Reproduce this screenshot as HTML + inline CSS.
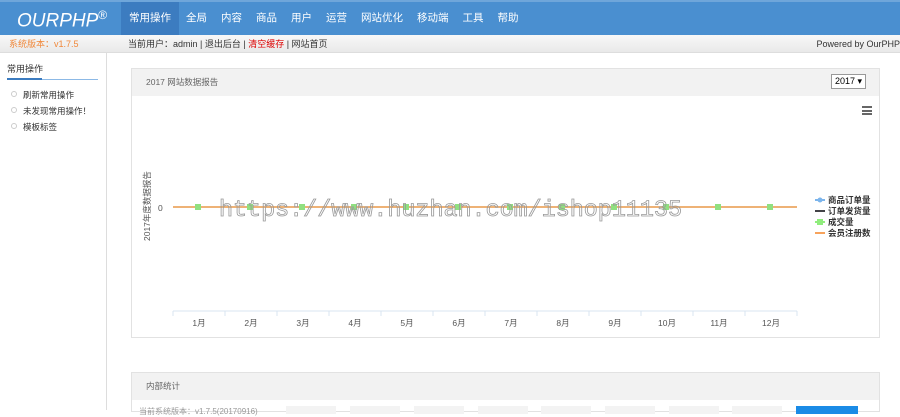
<!DOCTYPE html>
<html><head><meta charset="utf-8"><style>
*{margin:0;padding:0;box-sizing:border-box}
body{width:900px;height:410px;overflow:hidden;background:#fff;font-family:"Liberation Sans","Noto Sans CJK SC",sans-serif;font-size:9px;color:#333;position:relative}
.top{position:absolute;left:0;top:0;width:900px;height:35px;background:#4a8fd0;border-top:2px solid #6fa6da}
.logo{position:absolute;left:17px;top:6px;color:#fff;font-size:19px;font-style:italic;letter-spacing:0px}
.logo sup{font-size:12px;font-style:normal}
.nav{position:absolute;left:121px;top:0;height:33px;display:flex}
.nav span{color:#fff;font-size:10.5px;line-height:33px;padding:0 7px}
.nav span.on{background:#3c7cc0;padding:0 8px}
.sub{position:absolute;top:35px;left:0;width:900px;height:18px;background:linear-gradient(#f8f8f8,#e9e9e9);border-bottom:1px solid #ddd;line-height:18px}
.side{position:absolute;left:0;top:53px;width:107px;height:357px;background:#fff;border-right:1px solid #ddd}
.side h3{font-size:9px;font-weight:normal;margin:9px 0 0 7px}
.side .ln{position:absolute;left:7px;top:26px;width:91px;height:1px;background:#8cb9e6}
.side .ln2{position:absolute;left:7px;top:25px;width:35px;height:2px;background:#3c7cc0}
.side ul{list-style:none;position:absolute;top:37px;left:11px}
.side li{height:16px;line-height:11px;font-size:8.5px}
.side li:before{content:"";display:inline-block;width:4px;height:4px;border:1px solid #ccc;border-radius:50%;margin-right:6px;vertical-align:1px}
.panel{position:absolute;left:131px;width:749px;border:1px solid #e2e2e2;background:#fff}
.ph{height:27px;background:#f2f2f2;line-height:27px;padding-left:14px;color:#666;font-size:8.5px}
.bx{position:absolute;top:33px;width:50px;height:8px;background:#f3f3f3}
</style></head><body>
<div class="top"><div class="logo">OURPHP<sup>®</sup></div>
<div class="nav"><span class="on">常用操作</span><span>全局</span><span>内容</span><span>商品</span><span>用户</span><span>运营</span><span>网站优化</span><span>移动端</span><span>工具</span><span>帮助</span></div></div>
<div class="sub"><span style="position:absolute;left:9px;color:#f0883a">系统版本：v1.7.5</span>
<span style="position:absolute;left:128px">当前用户：admin | 退出后台 | <span style="color:#d00">清空缓存</span> | 网站首页</span>
<span style="position:absolute;right:0">Powered by OurPHP</span></div>
<div class="side"><h3>常用操作</h3><div class="ln"></div><div class="ln2"></div>
<ul><li>刷新常用操作</li><li>未发现常用操作！</li><li>模板标签</li></ul></div>
<div class="panel" style="top:68px;height:270px">
<div class="ph">2017 网站数据报告</div>
<div style="position:absolute;right:13px;top:5px;border:1px solid #999;background:#fff;padding:1px 3px;font-size:9px;color:#000">2017 ▾</div>
<div style="position:absolute;left:730px;top:37px;width:10px"><div style="height:2px;background:#666;margin-bottom:1.5px"></div><div style="height:2px;background:#666;margin-bottom:1.5px"></div><div style="height:2px;background:#666"></div></div>
<svg width="749" height="243" style="position:absolute;left:0;top:27px" font-family="Liberation Sans,Noto Sans CJK SC,sans-serif" font-size="8.5" fill="#555">
<text transform="translate(18,145) rotate(-90)">2017年度数据报告</text>
<text x="26" y="115">0</text>
<line x1="41" y1="111" x2="665" y2="111" stroke="#e6e6e6" stroke-width="2"/>
<line x1="41" y1="111" x2="665" y2="111" stroke="#f0a050" stroke-width="1.5"/>
<g fill="#90e080">
<rect x="63" y="108" width="6" height="6"/><rect x="115" y="108" width="6" height="6"/><rect x="167" y="108" width="6" height="6"/><rect x="219" y="108" width="6" height="6"/><rect x="271" y="108" width="6" height="6"/><rect x="323" y="108" width="6" height="6"/><rect x="375" y="108" width="6" height="6"/><rect x="427" y="108" width="6" height="6"/><rect x="479" y="108" width="6" height="6"/><rect x="531" y="108" width="6" height="6"/><rect x="583" y="108" width="6" height="6"/><rect x="635" y="108" width="6" height="6"/></g>
<line x1="41" y1="215" x2="665" y2="215" stroke="#d8e4f0"/>
<g stroke="#d8e4f0"><line x1="41" y1="215" x2="41" y2="220"/><line x1="93" y1="215" x2="93" y2="220"/><line x1="145" y1="215" x2="145" y2="220"/><line x1="197" y1="215" x2="197" y2="220"/><line x1="249" y1="215" x2="249" y2="220"/><line x1="301" y1="215" x2="301" y2="220"/><line x1="353" y1="215" x2="353" y2="220"/><line x1="405" y1="215" x2="405" y2="220"/><line x1="457" y1="215" x2="457" y2="220"/><line x1="509" y1="215" x2="509" y2="220"/><line x1="561" y1="215" x2="561" y2="220"/><line x1="613" y1="215" x2="613" y2="220"/><line x1="665" y1="215" x2="665" y2="220"/></g>
<g text-anchor="middle"><text x="67" y="230">1月</text><text x="119" y="230">2月</text><text x="171" y="230">3月</text><text x="223" y="230">4月</text><text x="275" y="230">5月</text><text x="327" y="230">6月</text><text x="379" y="230">7月</text><text x="431" y="230">8月</text><text x="483" y="230">9月</text><text x="535" y="230">10月</text><text x="587" y="230">11月</text><text x="639" y="230">12月</text></g>
<g font-weight="bold" fill="#333"><line x1="683" y1="104" x2="693" y2="104" stroke="#7cb5ec" stroke-width="2"/><circle cx="688" cy="104" r="2.5" fill="#7cb5ec"/><text x="696" y="107">商品订单量</text>
<line x1="683" y1="115" x2="693" y2="115" stroke="#434348" stroke-width="2"/><text x="696" y="118">订单发货量</text>
<line x1="683" y1="126" x2="693" y2="126" stroke="#90ed7d" stroke-width="2"/><rect x="685" y="123" width="6" height="6" fill="#90ed7d"/><text x="696" y="129">成交量</text>
<line x1="683" y1="137" x2="693" y2="137" stroke="#f7a35c" stroke-width="2"/><text x="696" y="140">会员注册数</text></g>
<text x="87" y="120" font-family="Liberation Mono,monospace" font-size="23" textLength="463" lengthAdjust="spacingAndGlyphs" fill="none" stroke="#999" stroke-width="0.8">https://www.huzhan.com/ishop11135</text>
</svg></div>
<div class="panel" style="top:372px;height:40px"><div class="ph">内部统计</div>
<div style="position:absolute;left:7px;top:33px;font-size:8px;color:#999">当前系统版本：v1.7.5(20170916)</div>
<div class="bx" style="left:154px"></div><div class="bx" style="left:218px"></div><div class="bx" style="left:282px"></div><div class="bx" style="left:346px"></div><div class="bx" style="left:409px"></div><div class="bx" style="left:473px"></div><div class="bx" style="left:537px"></div><div class="bx" style="left:600px"></div>
<div style="position:absolute;left:664px;top:33px;width:62px;height:8px;background:#1a8be6"></div></div>
</body></html>
